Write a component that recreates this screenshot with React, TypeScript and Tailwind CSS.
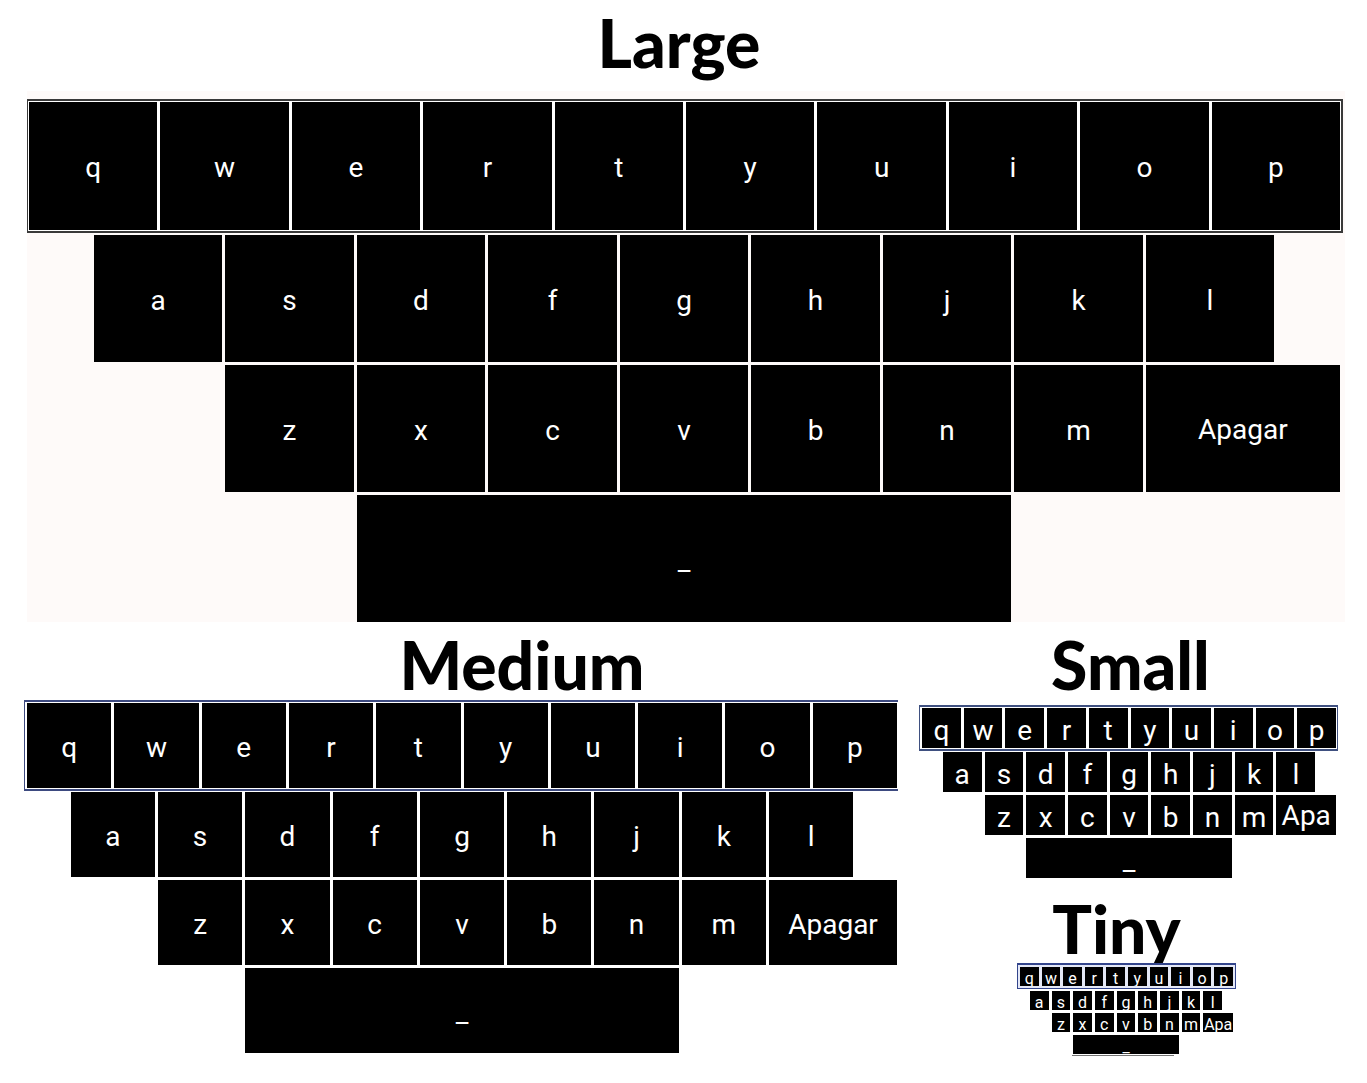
type Size = 'large' | 'medium' | 'small' | 'tiny';

type SizeStyle = {
  board: string;
  outline: string;
  lower: string;
  row: string;
  firstRow: string;
  key: string;
  eraseKey: string;
  erase: string;
};

const styles: Record<Size, SizeStyle> = {
  large: {
    board: 'bg-[#fefaf9] pt-2 pr-0.5',
    outline: 'border-l border-r-2 border-y-2 border-[#3a3a3a] bg-white p-px',
    lower: 'mt-0.5 gap-[3px] pl-px pr-[3px]',
    row: 'h-[127px] gap-x-[3px]',
    firstRow: 'h-32 gap-x-[3px]',
    key: 'pt-1 text-[28px]',
    eraseKey: 'pt-0.5 text-[28px]',
    erase: 'Apagar',
  },
  medium: {
    board: 'bg-white',
    outline: 'border-l border-y-2 border-[#3d4a80] bg-white py-px pl-0.5 pr-px',
    lower: 'mt-px gap-[3px] pl-[3px] pr-px',
    row: 'h-[85px] gap-x-[3px]',
    firstRow: 'h-[85px] gap-x-[3px]',
    key: 'pt-1 text-[28px]',
    eraseKey: 'pt-1 text-[28px]',
    erase: 'Apagar',
  },
  small: {
    board: 'bg-white',
    outline: 'border-x border-b-2 border-t-2 border-[#3f5080] bg-white py-px pl-0.5 pr-px',
    lower: 'mt-px gap-[3px] pl-[3px] pr-0.5',
    row: 'h-10 gap-x-[3px]',
    firstRow: 'h-10 gap-x-[3px]',
    key: 'pt-1.5 text-[28px]',
    eraseKey: 'pt-0.5 text-[28px]',
    erase: 'Apa',
  },
  tiny: {
    board: 'bg-white',
    outline: 'border-x border-b border-t-2 border-[#33458c] bg-[#e4e8f6] p-0.5',
    lower: 'mt-0.5 gap-[3px] pl-0.5 pr-[3px]',
    row: 'h-[19px] gap-x-[3px]',
    firstRow: 'h-[19px] gap-x-[3px]',
    key: 'pt-1 text-base',
    eraseKey: 'pt-1 text-base',
    erase: 'Apa',
  },
};

function Key({ label, name, look, place }: { label: string; name?: string; look: string; place: string }) {
  return (
    <button
      type="button"
      aria-label={name}
      className={`flex min-w-0 items-center justify-center overflow-hidden bg-black leading-none text-white ${look} ${place}`}
    >
      {label}
    </button>
  );
}

function Keyboard({ size }: { size: Size }) {
  const s = styles[size];
  const row = `grid grid-cols-[repeat(20,minmax(0,1fr))] ${s.row}`;
  return (
    <div className={`relative font-[Roboto,sans-serif] ${s.board}`}>
      <div className={s.outline}>
        <div className={`grid grid-cols-[repeat(20,minmax(0,1fr))] ${s.firstRow}`}>
          {[...'qwertyuiop'].map((c) => (
            <Key key={c} label={c} look={s.key} place="col-span-2" />
          ))}
        </div>
      </div>
      <div className={`flex flex-col ${s.lower}`}>
        <div className={row}>
          {[...'asdfghjkl'].map((c, i) => (
            <Key key={c} label={c} look={s.key} place={i === 0 ? 'col-start-2 col-end-4' : 'col-span-2'} />
          ))}
        </div>
        <div className={row}>
          {[...'zxcvbnm'].map((c, i) => (
            <Key key={c} label={c} look={s.key} place={i === 0 ? 'col-start-4 col-end-6' : 'col-span-2'} />
          ))}
          <Key label={s.erase} name="Apagar" look={s.eraseKey} place="col-span-3" />
        </div>
        <div className={row}>
          <Key label="_" name="Space" look={s.key} place="col-start-6 col-end-16" />
        </div>
      </div>
    </div>
  );
}

function Title({ text, place }: { text: string; place: string }) {
  return (
    <h2 className={`text-center font-[Lato,sans-serif] text-[66px] font-black leading-[66px] text-black ${place}`}>
      {text}
    </h2>
  );
}

export default function App() {
  return (
    <main className="min-h-screen bg-white">
      <section className="ml-[27px] mr-[22px]">
        <Title text="Large" place="pt-2.5 pr-3.5 pb-[15px]" />
        <Keyboard size="large" />
      </section>
      <div className="grid grid-cols-[874fr_419fr] gap-[21px] pt-2.5 pl-6 pr-[29px]">
        <section>
          <Title text="Medium" place="pl-[122px] pb-0.5" />
          <Keyboard size="medium" />
        </section>
        <div>
          <section>
            <Title text="Small" place="pl-1 pb-[7px]" />
            <Keyboard size="small" />
          </section>
          <section className="ml-[98px] mr-[102px] pt-[18px]">
            <Title text="Tiny" place="pr-5 pb-px" />
            <Keyboard size="tiny" />
            <div className="ml-[55px] mr-[62px] mt-px border-b border-neutral-500" />
          </section>
        </div>
      </div>
    </main>
  );
}
